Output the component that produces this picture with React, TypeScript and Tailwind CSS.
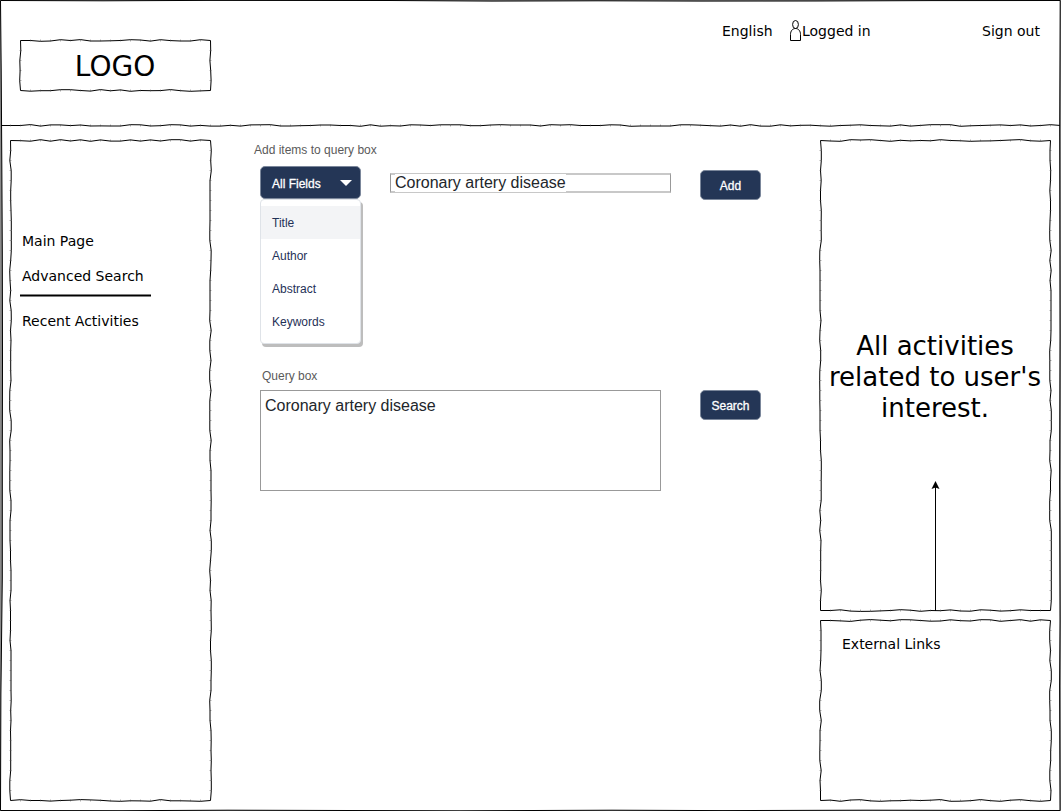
import type { ReactNode } from 'react';

type Edges = { top?: number[]; right?: number[]; bottom?: number[]; left?: number[] };

const STEP = 10;

function wobble(seed: number, count: number): number[] {
  const levels = [-0.8, -0.7, -0.5, 0, 0.2, 0.5, 0.7, 0.8];
  let s = seed * 7919 + 13;
  const out: number[] = [];
  for (let i = 0; i < count; i++) {
    s = (s * 48271) % 2147483647;
    const repeat = i > 0 && s % 10 < 3;
    out.push(repeat ? out[i - 1] : levels[Math.floor((s / 2147483647) * levels.length)]);
  }
  return out;
}

function sketchPaths(w: number, h: number, seed: number, edges: Edges) {
  const nx = w / STEP - 1;
  const ny = h / STEP - 1;
  const top = edges.top ?? wobble(seed, nx);
  const right = edges.right ?? wobble(seed + 11, ny);
  const bottom = edges.bottom ?? wobble(seed + 23, nx);
  const left = edges.left ?? wobble(seed + 37, ny);
  const pts: [number, number][] = [[0, 0]];
  const ticks: string[] = [];
  for (let i = 0; i < nx; i++) {
    const x = (i + 1) * STEP;
    pts.push([x, top[i] ?? 0]);
    ticks.push(`M${x + 2.5} 1.5v2M${x + 2.5} ${h + 1.5}v2`);
  }
  pts.push([w, 0]);
  for (let i = 0; i < ny; i++) {
    const y = (i + 1) * STEP;
    pts.push([w + (right[i] ?? 0), y]);
    ticks.push(`M1.5 ${y + 2.5}h2M${w + 1.5} ${y + 2.5}h2`);
  }
  pts.push([w, h]);
  for (let i = nx - 1; i >= 0; i--) pts.push([(i + 1) * STEP, h + (bottom[i] ?? 0)]);
  pts.push([0, h]);
  for (let i = ny - 1; i >= 0; i--) pts.push([left[i] ?? 0, (i + 1) * STEP]);
  const outline = 'M' + pts.map(([x, y]) => `${(x + 2.5).toFixed(2)} ${(y + 2.5).toFixed(2)}`).join('L') + 'Z';
  return { outline, ticks: ticks.join('') };
}

function SketchPanel({ w, h, seed, edges = {}, className, children }: {
  w: number; h: number; seed: number; edges?: Edges; className: string; children?: ReactNode;
}) {
  const { outline, ticks } = sketchPaths(w, h, seed, edges);
  return (
    <section className={`relative shrink-0 ${className}`}>
      <svg className="pointer-events-none absolute -left-[2px] -top-[2px]" width={w + 5} height={h + 5} fill="none" stroke="#000">
        <path d={outline} />
        <path d={ticks} strokeOpacity=".3" />
      </svg>
      {children}
    </section>
  );
}

const logoEdges: Edges = {
  top: [0, 0.8, 0.5, -0.8, 0, -0.9, 0.5, 0.5, 0.3, 0, -0.8, -0.5, 0.6, -0.8, 0.1, 0.5, 0.5, -0.8],
  right: [0.2, -0.6, 0.2, 0.6],
  bottom: [0.7, 0.2, 0.2, -0.8, -0.8, 0, 0.6, -0.9, 0.3, -0.6, 0.8, 0, 0.2, 0.1, -0.9, 0.2, 0.8, 0.4],
  left: [0.3, -0.7, -0.4, -0.8],
};

const leftEdges: Edges = {
  top: [0.2, 0.7, -0.8, 0.7, -0.8, 0.5, -0.7, 0.8, -0.6, 0.6, 0.6, -0.6, 0.6, -0.6, 0.5, -0.8, -0.8, 0.6, -0.6],
  bottom: [-0.8, 0, 0, 0.6, 0, -0.3, -0.9, -0.6, -0.2, 0.5, 0.8, 0.3, 0.4, 0.7, -0.9, 0.3, 0.3, 0.5, 0.8],
};

const activityEdges: Edges = {
  top: [0.5, 0.8, -0.8, -0.5, -0.8, 0, 0.8, -0.2, 0.4, 0, 0.3, -0.8, 0, 0.3, 0.8, 0.5, 0.4, 0, -0.5, -0.9, 0.3, 0.7],
  bottom: [0, -0.7, 0.6, 0.9, 0.8, 0.4, 0, -0.8, -0.3, 0.8, 0, 0.2, -0.6, 0.5, 0.7, -0.7, -0.3, 0.6, 0.2, -0.7, 0, 0],
};

const linkEdges: Edges = {
  top: [0, 0.4, 0.9, -0.3, -0.9, -0.3, 0.3, -0.8, -0.7, 0, 0.7, 0.5, -0.7, 0.2, 0.5, -0.8, -0.7, 0.8, 0, -0.8, 0.7, -0.7],
  bottom: [-0.4, 0.8, -0.5, -0.8, 0.4, 0.8, 0.3, 0.2, -0.3, 0, -0.3, -0.9, 0.8, 0.7, 0.2, -0.9, 0.2, 0.8, -0.3, -0.8, 0.2, 0.8],
};

function HeaderRule() {
  const ys = wobble(91, 105);
  const known = [0, 0, -0.9, 0.6, -0.6, -0.6, 0.1, -0.5, 0.5, 0.4, 0.5, 0.5, -0.8, -0.7, 0.5, 0.2, -0.8, -0.6, 0.6, -0.1, 0.6, 0.6, -0.2, 0.6, -0.6];
  const end = [-0.3, 0.2, 0.6, -0.5, 0.7, -0.8, 0.6, 0.7, -0.7, 0.4, -0.2, -0.3, 0.3, 0.7, 0, -0.3, -0.7, 0, 0.3, 0.6, -0.6, 0.6, -0.1, -0.8, -0.8, -0.8, 0.8, 0.3, 0, -0.3, -0.6, 0, -0.6, 0.5, 0];
  known.forEach((y, i) => { ys[i] = y; });
  end.forEach((y, i) => { ys[69 + i] = y; });
  const d = 'M0 2.5' + ys.map((y, i) => `L${(i + 1) * 10 + 0.5} ${(2.5 + y).toFixed(2)}`).join('') + 'L1061 2.5';
  const ticks = ys.map((_, i) => `M${(i + 1) * 10 + 0.5} 1.5v2`).join('');
  return (
    <svg className="block shrink-0" width="1061" height="5" fill="none" stroke="#000">
      <path d={d} />
      <path d={ticks} strokeOpacity=".3" />
    </svg>
  );
}

const frameLine =
  'M.5 .5L103 .8L207 .4L390 .5L492 1.1L598 .8L701 1.1L816 1L931 .6L1060.2 .5L1059.7 131L1060 336L1059.6 482L1060 621L1059.6 686L1060 810.5L865 810.2L723 810.6L612 810.2L460 810.8L228 810.2L122 810.7L.5 810.5L.9 694L2.3 578L2.3 463L2.5 358L2.3 252L1.8 162L1.2 70Z';

function PageFrame() {
  return (
    <svg className="pointer-events-none absolute left-0 top-0" width="1061" height="811">
      <path d={`M0 0H1061V811H0Z${frameLine}`} fill="#8a8a8a" fillRule="evenodd" />
      <path d={frameLine} fill="none" stroke="#000" />
    </svg>
  );
}

function PersonIcon() {
  return (
    <svg className="shrink-0" width="12" height="22" viewBox="0 0 12 22" fill="none" stroke="#000">
      <ellipse cx="5.5" cy="4.5" rx="2.9" ry="4" />
      <path d="M.5 20.5V14.5C.5 11 2.5 8.5 5.5 8.5S10.5 11 10.5 14.5V20.5Z" />
    </svg>
  );
}

const fields = ['Title', 'Author', 'Abstract', 'Keywords'];

const buttonClass =
  'flex h-[30px] w-[61px] items-center justify-center rounded-[5px] border border-[#7b879b] bg-[#243656] bg-clip-border pt-px text-[12px] text-white [-webkit-text-stroke:0.3px_white]';

export default function App() {
  return (
    <div className="relative flex h-[811px] w-[1061px] flex-col overflow-hidden bg-white font-['DejaVu_Sans',sans-serif] text-[14px] text-black">
      <PageFrame />
      <header className="flex h-[123px] shrink-0 items-start pl-5">
        <SketchPanel w={190} h={50} seed={3} edges={logoEdges} className="mt-10 flex h-[51px] w-[191px] items-center justify-center">
          <h1 className="pr-px pt-[2px] text-[28px] leading-[34px]">LOGO</h1>
        </SketchPanel>
        <nav className="ml-[511px] mt-5 flex h-[22px] items-center whitespace-nowrap">
          <span className="w-[68px]">English</span>
          <span className="flex w-[192px] items-center">
            <span className="flex w-[12px] shrink-0"><PersonIcon /></span>
            Logged in
          </span>
          <span>Sign out</span>
        </nav>
      </header>
      <HeaderRule />
      <main className="flex min-h-0 flex-1 items-start pl-[10px] pt-3">
        <SketchPanel w={200} h={660} seed={17} edges={leftEdges} className="h-[661px] w-[201px]">
          <ul className="flex flex-col pl-3 pt-[91px] leading-5">
            <li>Main Page</li>
            <li className="mt-[15px]">Advanced Search</li>
            <li className="-ml-[2px] mt-[8px] h-[3px] w-[131px] border-y border-[#808080] bg-black" />
            <li className="mt-[14px]">Recent Activities</li>
          </ul>
        </SketchPanel>

        <div className="flex w-[609px] flex-col pl-[43px] font-['Liberation_Sans',Arial,sans-serif] text-[12px]">
          <p className="mt-[2px] h-4 leading-4 text-[#5a5a5a]">Add items to query box</p>
          <div className="ml-[6px] mt-[8px] flex items-start">
            <div className="h-[181px] w-[102px]">
              <div className="flex h-[33px] w-[101px] items-center justify-between rounded-[5px] border border-[#7b879b] bg-[#243656] pl-[11px] pr-2 text-white [-webkit-text-stroke:0.3px_white]">
                <span className="pt-[2px]">All Fields</span>
                <svg width="12" height="6"><path d="M0 0H12L6 6Z" fill="#fff" /></svg>
              </div>
              <ul className="flex h-[145px] w-[101px] flex-col rounded-[4px] border border-[#dfe3e8] bg-white pt-[6px] text-[#1f3157] shadow-[2px_3px_0_#bdbdbd]">
                {fields.map((f, i) => (
                  <li key={f} className={`flex h-[33px] items-center pl-[11px] ${i === 0 ? 'bg-[#f3f4f6]' : ''}`}>{f}</li>
                ))}
              </ul>
            </div>
            <div className="ml-7 mt-[7px] flex h-[20px] w-[281px] items-center border-x border-y-2 border-x-[#999] border-y-[#c8c8c8] pl-1 text-[16px] text-[#22262b]">
              <span className="-my-px h-[18px] bg-white leading-[17px]">Coronary artery disease</span>
            </div>
            <button className={`ml-[29px] mt-1 ${buttonClass}`}>Add</button>
          </div>
          <p className="ml-[8px] mt-[21px] h-4 leading-4 text-[#5a5a5a]">Query box</p>
          <div className="ml-[6px] mt-[6px] flex items-start">
            <div className="h-[101px] w-[401px] border border-[#999] px-1 pt-[5px] text-[16px] leading-5 text-[#22262b]">
              Coronary artery disease
            </div>
            <button className={`ml-[39px] ${buttonClass}`}>Search</button>
          </div>
        </div>

        <aside className="flex flex-col gap-[9px]">
          <SketchPanel w={230} h={470} seed={41} edges={activityEdges} className="flex h-[471px] w-[231px] flex-col items-center">
            <p className="mt-[191px] pr-px text-center text-[26px] leading-[31px]">
              All activities<br />related to user's<br />interest.
            </p>
            <svg className="mt-[57px]" width="9" height="130" viewBox="0 0 9 130">
              <path d="M4.5 5V130" stroke="#000" />
              <path d="M4.5 0L8.5 8L4.5 6.5L.5 8Z" />
            </svg>
          </SketchPanel>
          <SketchPanel w={230} h={180} seed={57} edges={linkEdges} className="h-[181px] w-[231px]">
            <p className="pl-[22px] pt-[14px] leading-5">External Links</p>
          </SketchPanel>
        </aside>
      </main>
    </div>
  );
}
